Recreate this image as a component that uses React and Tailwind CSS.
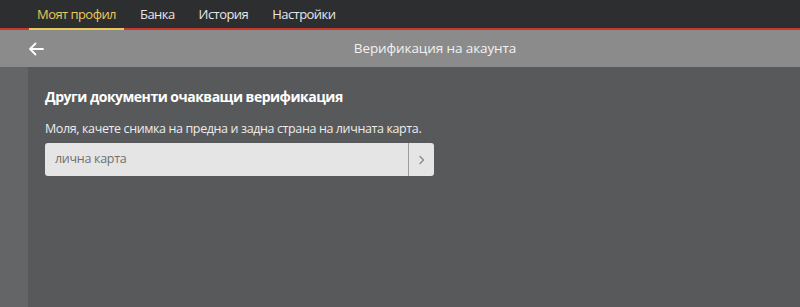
import React, { useState } from "react";

const tabs = ["Моят профил", "Банка", "История", "Настройки"];

const App = () => {
  const [active, setActive] = useState(0);
  const [doc, setDoc] = useState("");

  return (
    <div
      className="w-[800px] h-[307px] flex flex-col bg-[#58595b] overflow-hidden"
      style={{ fontFamily: '"Open Sans", "Noto Sans", sans-serif' }}
    >
      {/* top nav */}
      <div className="h-[30px] shrink-0 flex gap-2 bg-[#2d2e30] border-b-2 border-[#c8372d] pl-[29px]">
        {tabs.map((tab, i) => (
          <button
            key={tab}
            onClick={() => setActive(i)}
            className={
              i === active
                ? "h-[30px] -mb-[2px] px-2 text-[13px] tracking-[-0.55px] leading-[26px] text-[#e8c95c] border-b-2 border-[#e8c95c]"
                : "h-[30px] -mb-[2px] px-2 text-[13px] tracking-[-0.55px] leading-[26px] text-[#e6e6e6] border-b-2 border-transparent"
            }
          >
            {tab}
          </button>
        ))}
      </div>

      {/* page header */}
      <div className="h-[37px] shrink-0 flex items-center bg-[#8b8b8b]">
        <button className="w-[70px] h-full flex items-center pl-[28px] text-white">
          <svg width="16" height="14" viewBox="0 0 16 14" fill="none">
            <path
              d="M15 7H2M7.5 1.5L2 7l5.5 5.5"
              stroke="white"
              strokeWidth="1.8"
              strokeLinecap="round"
              strokeLinejoin="round"
            />
          </svg>
        </button>
        <div className="flex-1 text-center text-[13.5px] tracking-[-0.1px] text-[#f2f2f2]">
          Верификация на акаунта
        </div>
      </div>

      {/* body */}
      <div className="flex-1 flex">
        <div className="w-[28px] shrink-0 bg-[#646567]" />
        <div className="flex-1 pl-[17px] pt-[20px]">
          <h2 className="text-[14px] tracking-[-0.5px] font-bold text-white leading-[20px]">
            Други документи очакващи верификация
          </h2>
          <p className="mt-[13px] text-[12.5px] tracking-[-0.38px] text-[#ececec] leading-[18px]">
            Моля, качете снимка на предна и задна страна на личната карта.
          </p>
          <div className="mt-[5px] w-[389px] h-[33px] flex rounded-[3px] bg-[#e5e5e5] overflow-hidden">
            <input
              value={doc}
              onChange={(e) => setDoc(e.target.value)}
              placeholder="лична карта"
              className="flex-1 min-w-0 px-[10px] bg-transparent text-[12.5px] tracking-[-0.3px] text-[#555] placeholder:text-[#707070] outline-none"
            />
            <button className="w-[26px] h-full flex items-center justify-center border-l border-[#9d9d9d]">
              <svg width="8" height="10" viewBox="0 0 8 10" fill="none">
                <path
                  d="M2 1.5L5.5 5 2 8.5"
                  stroke="#8a8a8a"
                  strokeWidth="1.4"
                  strokeLinecap="round"
                  strokeLinejoin="round"
                />
              </svg>
            </button>
          </div>
        </div>
      </div>
    </div>
  );
};

export default App;
